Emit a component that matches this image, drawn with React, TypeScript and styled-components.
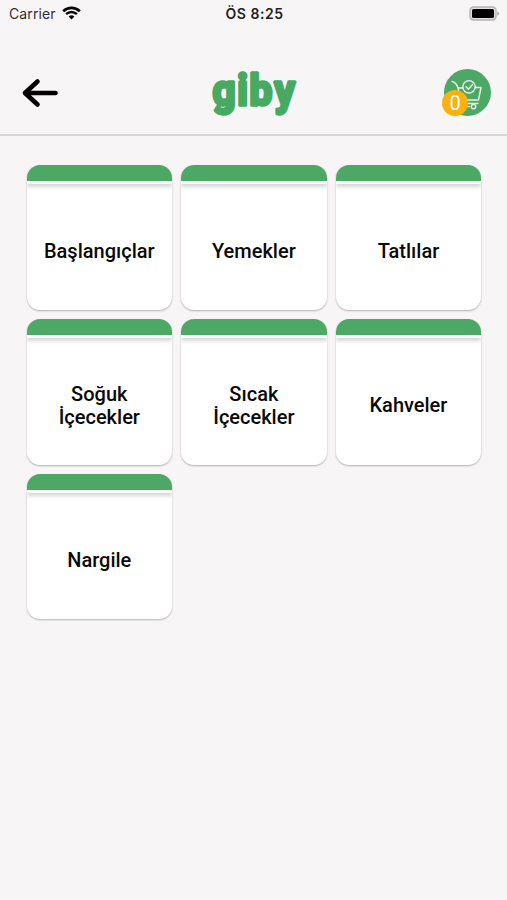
import React from "react";
import styled, { createGlobalStyle } from "styled-components";

const GlobalStyle = createGlobalStyle`
  * { box-sizing: border-box; }
  body { margin: 0; background: #f7f5f6; }
`;

const Screen = styled.div`
  min-height: 900px;
  background: #f7f5f6;
  font-family: Roboto, "Liberation Sans", sans-serif;
  color: #090909;
`;

const StatusBar = styled.div`
  display: grid;
  grid-template-columns: 1fr auto 1fr;
  align-items: center;
  height: 28px;
  padding: 0 7px 2px 9px;
  font-family: Inter, sans-serif;
  font-size: 14px;
`;

const Carrier = styled.div`
  display: flex;
  align-items: center;
  gap: 6px;
  color: #303030;
  letter-spacing: 0.1px;
  svg { display: block; margin-top: -1px; }
`;

const Clock = styled.div`
  font-weight: 600;
  font-size: 14px;
  letter-spacing: 0.55px;
  color: #222;
`;

const Battery = styled.svg`
  display: block;
  justify-self: end;
`;

const Header = styled.header`
  display: grid;
  grid-template-columns: 1fr auto 1fr;
  align-items: center;
  height: 108px;
  padding: 22px 16px 0 21px;
  border-bottom: 2px solid #d9d7d8;
`;

const IconButton = styled.button<{ $end?: boolean }>`
  display: block;
  padding: 0;
  border: 0;
  background: none;
  justify-self: ${(p) => (p.$end ? "end" : "start")};
  svg { display: block; }
`;

const BackButton = styled(IconButton)`
  padding-top: 2px;
`;

const CartButton = styled(IconButton)`
  position: relative;
`;

const Badge = styled.span`
  position: absolute;
  left: -2px;
  bottom: 0;
  width: 26px;
  height: 26px;
  border-radius: 50%;
  background: #fcb10d;
  color: #fff;
  font: 400 20px/26px Roboto, sans-serif;
  text-align: center;
`;

const Logo = styled.svg`
  display: block;
  overflow: visible;
  margin-left: -5px;
  text {
    font-family: Roboto, sans-serif;
    font-weight: 700;
    font-size: 43px;
    fill: #47aa62;
    stroke: #47aa62;
    stroke-width: 3.4px;
    stroke-linejoin: round;
    stroke-linecap: round;
  }
`;

const Grid = styled.main`
  display: grid;
  grid-template-columns: repeat(3, 145.4px);
  grid-auto-rows: 145.2px;
  gap: 9.3px 9.2px;
  padding: 29px 0 0 26.6px;
`;

const Card = styled.button`
  display: flex;
  flex-direction: column;
  padding: 0;
  border: 0;
  border-radius: 13px;
  overflow: hidden;
  background: #fff;
  box-shadow: 0 1px 2px rgba(0, 0, 0, 0.28);
`;

const CardCap = styled.div`
  flex: none;
  width: 100%;
  height: 19px;
  border-bottom: 3px solid #fbfdfb;
  background: #4ea865;
  box-shadow: 0 3px 4px rgba(0, 0, 0, 0.16);
`;

const CardLabel = styled.div`
  flex: 1;
  display: flex;
  align-items: center;
  justify-content: center;
  width: 100%;
  padding: 8px 24px 0;
  white-space: pre-line;
  text-align: center;
  font: 500 20px/23px Roboto, sans-serif;
  color: #090909;
`;

const categories = [
  "Başlangıçlar",
  "Yemekler",
  "Tatlılar",
  "Soğuk\nİçecekler",
  "Sıcak\nİçecekler",
  "Kahveler",
  "Nargile",
];

const WifiIcon = () => (
  <svg width="19" height="14" viewBox="0 0 19 14" fill="none" stroke="#080808">
    <path d="M1.2 5.2C6 .7 13 .7 17.8 5.2" strokeWidth="2.7" />
    <path d="M4.1 8.2C7.2 5.2 11.8 5.2 14.9 8.2" strokeWidth="2.4" />
    <path d="M6.6 10.5Q9.5 8.1 12.4 10.5L9.5 13.5Z" fill="#080808" stroke="none" />
  </svg>
);

const BackIcon = () => (
  <svg width="38" height="30" viewBox="0 0 38 30" fill="none" stroke="#000" strokeWidth="4.6" strokeLinecap="round" strokeLinejoin="round">
    <path d="M34.5 15H4M16.5 3.5L4 15l12.5 11.5" />
  </svg>
);

const CartIcon = () => (
  <svg width="47" height="47" viewBox="0 0 47 47" fill="none" stroke="#e6f5e9" strokeWidth="1.4" strokeLinecap="round" strokeLinejoin="round">
    <circle cx="23.5" cy="23.5" r="23.5" fill="#4ea865" stroke="none" />
    <path d="M8 12.5C12 13 13 16 14 19H18.5M14 19L17 31H33.5M31 18.5H37L34.5 31M22 34.5H34" />
    <circle cx="25" cy="17.8" r="6.2" />
    <path d="M22 17.8L24.5 20.3L28.5 15.5" />
    <circle cx="29.5" cy="37.6" r="2.2" />
    <path d="M22 37.6H25.5" />
  </svg>
);

export default function App() {
  return (
    <Screen>
      <GlobalStyle />
      <StatusBar>
        <Carrier>Carrier <WifiIcon /></Carrier>
        <Clock>ÖS 8:25</Clock>
        <Battery width="31" height="15" viewBox="0 0 31 15">
          <rect x="1" y="1" width="26" height="13" rx="3.5" fill="#e1dfe0" stroke="#b5b3b4" strokeWidth="1.4" />
          <rect x="3" y="3" width="22" height="9" rx="1.5" fill="#000" />
          <path d="M28.3 5.2Q32 7.5 28.3 9.8Z" fill="#aaa" />
        </Battery>
      </StatusBar>
      <Header>
        <BackButton aria-label="Geri"><BackIcon /></BackButton>
        <Logo width="88" height="56" viewBox="0 0 88 56">
          <text x="2.7 29 42 68.6" y="41" transform="scale(0.94 1)">giby</text>
        </Logo>
        <CartButton $end aria-label="Sepet">
          <CartIcon />
          <Badge>0</Badge>
        </CartButton>
      </Header>
      <Grid>
        {categories.map((name) => (
          <Card key={name}>
            <CardCap />
            <CardLabel>{name}</CardLabel>
          </Card>
        ))}
      </Grid>
    </Screen>
  );
}
